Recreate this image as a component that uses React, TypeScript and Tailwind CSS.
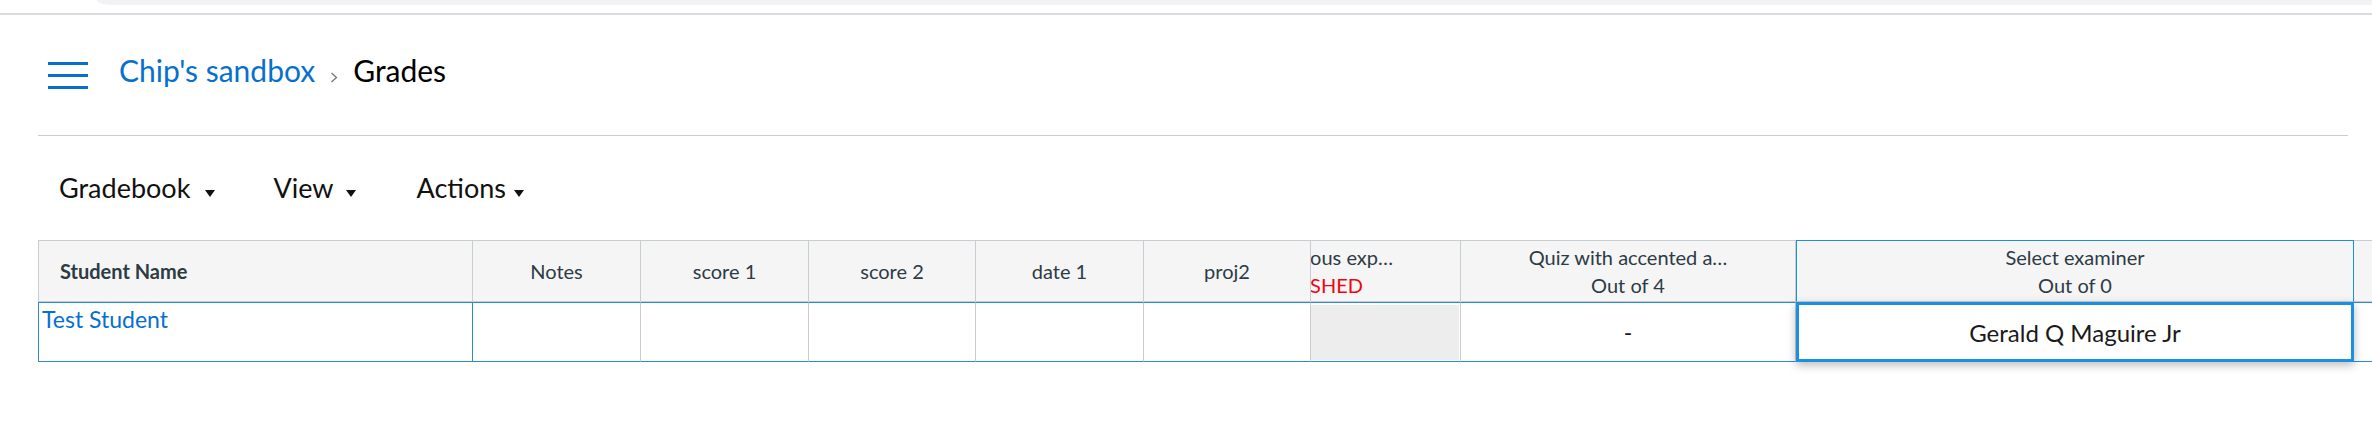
import React from "react";

const Tri = () => (
  <svg width="10" height="7" viewBox="0 0 10 7" className="shrink-0 mt-[19px]">
    <polygon points="0,0 10,0 5,7" fill="#111" />
  </svg>
);

export default function App() {
  return (
    <div className="w-[2372px] h-[432px] bg-white overflow-hidden font-['Lato',sans-serif]">
      {/* browser chrome remnant */}
      <div className="h-[13px] flex">
        <div className="w-[97px] shrink-0" />
        <div className="flex-1 h-[5px] bg-[#f1f2f4] rounded-bl-[14px_5px]" />
      </div>
      <div className="h-[2px] bg-[#dadadf]" />

      {/* header / breadcrumb */}
      <div className="h-[120px] flex items-start pl-[48px]">
        <div className="mt-[47px] w-[40px] flex flex-col gap-[9px] shrink-0">
          <div className="h-[3px] bg-[#0770cf]" />
          <div className="h-[3px] bg-[#0770cf]" />
          <div className="h-[3px] bg-[#0770cf]" />
        </div>
        <div className="ml-[31px] mt-[37px] flex items-start text-[30px] leading-[36px] whitespace-nowrap">
          <span className="text-[#0770cf]">Chip's sandbox</span>
          <svg width="8" height="11" viewBox="0 0 8 11" className="mx-[15px] mt-[20px] shrink-0">
            <polyline points="1.5,1 6.5,5.5 1.5,10" fill="none" stroke="#6b7780" strokeWidth="1.3" />
          </svg>
          <span className="text-black">Grades</span>
        </div>
      </div>
      <div className="ml-[38px] mr-[24px] h-px bg-[#c7cdd1]" />

      {/* toolbar */}
      <div className="mt-[35px] h-[33px] flex items-start pl-[59px] text-[27px] leading-[33px] text-[#111] whitespace-nowrap">
        <span>Gradebook</span>
        <span className="ml-[15px] flex"><Tri /></span>
        <span className="ml-[58px]">View</span>
        <span className="ml-[13px] flex"><Tri /></span>
        <span className="ml-[60px]">Actions</span>
        <span className="ml-[8px] flex"><Tri /></span>
      </div>

      {/* grid */}
      <div className="mt-[36px] ml-[38px] flex flex-col text-[#2d3b45]">
        {/* header row */}
        <div className="flex h-[62px] text-[20px] leading-[28px]">
          <div className="w-[435px] shrink-0 border border-[#c7cdd1] bg-[#f5f5f5] flex items-center pl-[21px] font-bold text-[20px]">
            Student Name
          </div>
          <div className="w-[168px] shrink-0 border-y border-r border-[#c7cdd1] bg-[#f5f5f5] flex items-center justify-center">Notes</div>
          <div className="w-[168px] shrink-0 border-y border-r border-[#c7cdd1] bg-[#f5f5f5] flex items-center justify-center">score 1</div>
          <div className="w-[167px] shrink-0 border-y border-r border-[#c7cdd1] bg-[#f5f5f5] flex items-center justify-center">score 2</div>
          <div className="w-[168px] shrink-0 border-y border-r border-[#c7cdd1] bg-[#f5f5f5] flex items-center justify-center">date 1</div>
          <div className="w-[167px] shrink-0 border-y border-r border-[#c7cdd1] bg-[#f5f5f5] flex items-center justify-center">proj2</div>
          <div className="w-[150px] shrink-0 border-y border-r border-[#c7cdd1] bg-[#f5f5f5] overflow-hidden flex flex-col items-end justify-center whitespace-nowrap">
            <div className="pr-[67px]">Previous exp…</div>
            <div className="pr-[97px] text-[#ee0612]">UNPUBLISHED</div>
          </div>
          <div className="w-[335px] shrink-0 border-y border-r border-[#c7cdd1] bg-[#f5f5f5] flex flex-col items-center justify-center whitespace-nowrap">
            <div>Quiz with accented a…</div>
            <div>Out of 4</div>
          </div>
          <div className="w-[558px] shrink-0 border-x border-t border-[#1b8fe0] border-b-[#c7cdd1] border-b bg-[#f5f5f5] flex flex-col items-center justify-center whitespace-nowrap">
            <div>Select examiner</div>
            <div>Out of 0</div>
          </div>
          <div className="flex-1 border-y border-[#c7cdd1] bg-[#f5f5f5]" />
        </div>

        {/* body row */}
        <div className="flex h-[60px] text-[23px] leading-[27px]">
          <div className="w-[435px] shrink-0 border border-[#2a8ad8] pl-[3px] pt-[3px] text-[#0770cf]">
            Test Student
          </div>
          <div className="w-[168px] shrink-0 border-y border-r border-[#2a8ad8] border-r-[#c7cdd1]" />
          <div className="w-[168px] shrink-0 border-y border-r border-[#2a8ad8] border-r-[#c7cdd1]" />
          <div className="w-[167px] shrink-0 border-y border-r border-[#2a8ad8] border-r-[#c7cdd1]" />
          <div className="w-[168px] shrink-0 border-y border-r border-[#2a8ad8] border-r-[#c7cdd1]" />
          <div className="w-[167px] shrink-0 border-y border-r border-[#2a8ad8] border-r-[#c7cdd1]" />
          <div className="w-[150px] shrink-0 border-y border-r border-[#2a8ad8] border-r-[#c7cdd1] flex flex-col pt-[2px] pb-[1px] pr-[1px]">
            <div className="flex-1 bg-[#ededed]" />
          </div>
          <div className="w-[335px] shrink-0 border-y border-r border-[#2a8ad8] border-r-[#c7cdd1] flex items-center justify-center text-[#1a1a1a]">
            -
          </div>
          <div className="relative z-10 w-[558px] shrink-0 border-[3px] border-[#1b8fe0] bg-white shadow-[0_3px_9px_rgba(0,0,0,0.28)] flex items-center justify-center text-[24px] text-[#1a1a1a] whitespace-nowrap">
            Gerald Q Maguire Jr
          </div>
          <div className="flex-1 border-y border-[#2a8ad8]" />
        </div>
      </div>
    </div>
  );
}
